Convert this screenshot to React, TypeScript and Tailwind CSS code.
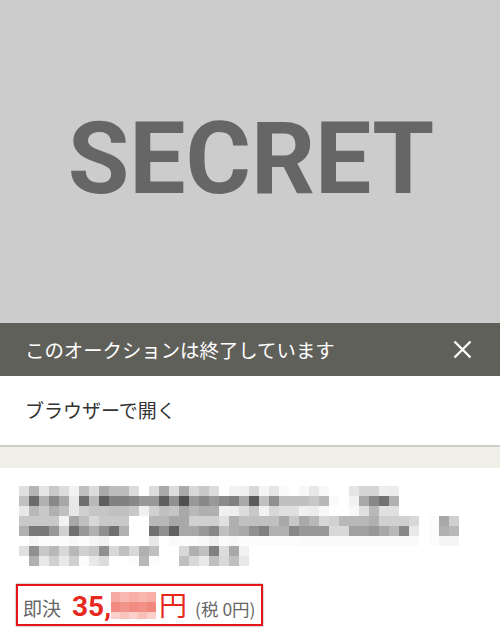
// pixelated description text, one string per 10px row, 44 cells each
const BLUR_ROWS = [
  'e0 b5 e5 c8 dc f2 c0 dc aa bc bc dc ff dc aa dc aa d8 c8 dc ff f2 f0 d8 f5 e5 fa ff f8 e8 f8 ff ff e5 d5 d5 ee ec ff ff ff ff ff ff',
  'c0 6a b0 88 a8 e8 6e b8 5e 80 80 88 98 98 5e 90 50 98 88 98 8a 80 a8 5a c0 90 c0 c0 c0 c8 b8 fa ff f2 a8 88 72 b0 ff ff ff ff ff ff',
  'e8 b8 c8 b0 c0 e8 d0 c5 c5 c0 c0 c8 f0 d0 c0 c5 a8 b8 b0 b0 f0 ee dc c8 f2 d8 e0 e0 f0 ec f8 ff ff f8 e0 b8 e0 e0 ff ff ff ff ff ff',
  'c8 c8 c8 c8 f2 a8 c0 d8 c8 c8 c8 ff ff b8 b8 a8 a8 d0 d0 d0 e0 b0 c0 c0 c0 c0 a8 c8 a8 b8 d8 d0 b8 b8 b8 b0 d0 d0 d0 d8 ff fc a8 d0',
  'b0 78 78 98 d0 70 98 b0 90 70 b0 ff ff 70 90 60 a8 a8 98 88 c0 b0 a8 90 80 b0 b0 88 98 98 98 d8 d8 a0 a0 98 a8 b8 88 e8 ff fc b0 b8',
  'ff f5 fc fc fc f8 fc f5 f2 ff ff ff ff e8 ff fa fc fc f8 f0 fa f8 fc fc fc fc fc fc fa fa fa fa fa fa fa fa fa fa fa fa ff fc f5 f5',
  'e0 90 c8 b8 d8 b8 d0 c8 90 d8 c0 d8 b0 c0 ff ff d8 b0 c0 80 dc a8 f2 ff ff ff ff ff ff ff ff ff ff ff ff ff ff ff ff ff ff ff ff ff',
  'ff b0 e8 d0 e8 d0 fc e8 dc ff ff fc b8 fc ff ff c0 d8 e8 c0 d8 c0 e8 ff ff ff ff ff ff ff ff ff ff ff ff ff ff ff ff ff ff ff ff ff',
]

// hidden digits of the price
const PRICE_ROWS = [
  ['#f7aaa3', '#f9b8b1', '#f6aea7', '#f9b6af', '#f7aea6'],
  ['#f28a80', '#f3948a', '#f28c82', '#f39188', '#f0887e'],
  ['#fbd0cb', '#fac4be', '#fbd0cb', '#f9c0ba', '#fbd0cb'],
]

const BlurredText = () => (
  <svg width={440} height={80} viewBox="0 0 440 80" shapeRendering="crispEdges" className="block">
    {BLUR_ROWS.map((row, y) =>
      row.split(' ').map((g, x) => (
        <rect key={`${y}-${x}`} x={x * 10} y={y * 10} width={10} height={10} fill={`#${g}${g}${g}`} />
      ))
    )}
  </svg>
)

const BlurredPrice = () => (
  <svg width={45} height={27} viewBox="0 0 45 27" shapeRendering="crispEdges" className="block">
    {PRICE_ROWS.map((row, y) =>
      row.map((c, x) => <rect key={`${y}-${x}`} x={x * 9} y={y * 10} width={9} height={10} fill={c} />)
    )}
  </svg>
)

const CloseIcon = () => (
  <svg width={19} height={19} viewBox="0 0 19 19" className="block">
    <path d="M1.5 1.5 L17.5 17.5 M17.5 1.5 L1.5 17.5" stroke="#ffffff" strokeWidth={2.3} strokeLinecap="butt" />
  </svg>
)

const App = () => {
  return (
    <div className="w-[500px] h-[638px] overflow-hidden bg-white font-['Roboto','Noto_Sans_CJK_JP',sans-serif]">
      <div className="h-[323px] bg-[#cccccc] flex items-center justify-center">
        <span className="text-[100px] leading-none font-bold text-[#666666] mb-[5px] ml-[2px]">SECRET</span>
      </div>

      <div className="h-[53px] bg-[#60605b] flex items-center justify-between pl-[25px] pr-[28px]">
        <span className="text-white text-[19.4px] font-['Noto_Sans_CJK_JP',sans-serif]">このオークションは終了しています</span>
        <CloseIcon />
      </div>

      <div className="h-[71px] flex items-center px-[25px] border-b-2 border-[#cfcfc7]">
        <span className="text-[#333333] text-[19px] font-['Noto_Sans_CJK_JP',sans-serif]">ブラウザーで開く</span>
      </div>
      <div className="h-[21px] bg-[#efefe8]" />

      <div className="pt-[18px] pl-[19px]">
        <BlurredText />
      </div>

      <div className="mt-[18px] ml-[16px] w-[247px] h-[42px] border-2 border-[#e5161a] shadow-[0_0_2px_rgba(0,0,0,0.45)] pl-[5px] pt-[4px]">
        <div className="flex items-baseline leading-none">
          <span className="text-[19px] text-[#666666] font-['Noto_Sans_CJK_JP',sans-serif]">即決</span>
          <span className="ml-[11px] text-[28px] font-bold text-[#e8281e]">35,</span>
          <div className="self-start mt-[2px]">
            <BlurredPrice />
          </div>
          <span className="ml-[3px] text-[28px] text-[#e8281e] font-['Noto_Sans_CJK_JP',sans-serif]">円</span>
          <span className="ml-[8px] text-[17.5px] text-[#666666] font-['Noto_Sans_CJK_JP',sans-serif]">(税 0円)</span>
        </div>
      </div>
    </div>
  )
}

export default App
